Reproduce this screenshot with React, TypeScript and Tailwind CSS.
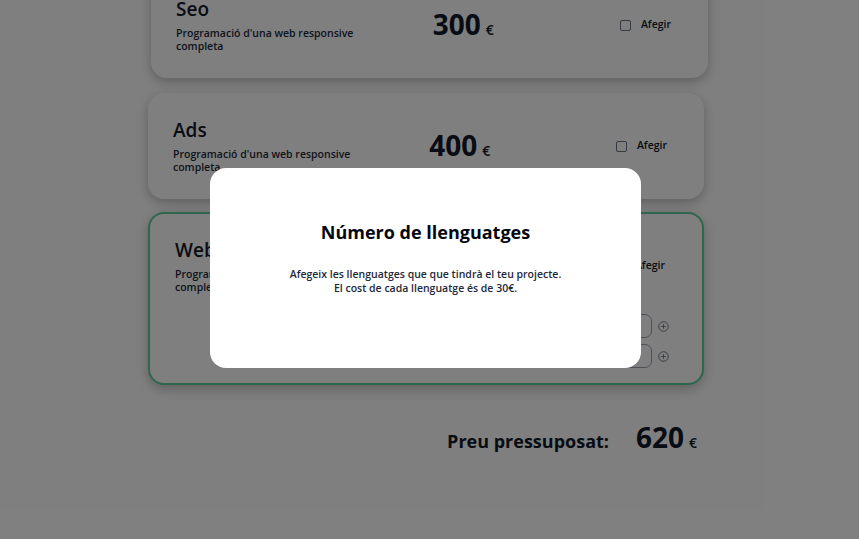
import React from 'react';

interface Service {
  name: string;
  price: number;
  selected?: boolean;
}

const font = { fontFamily: '"Open Sans", "DejaVu Sans", sans-serif' };

const PlusCircle: React.FC = () => (
  <svg width="11" height="11" viewBox="0 0 12 12" className="text-gray-500">
    <circle cx="6" cy="6" r="5.2" fill="none" stroke="currentColor" strokeWidth="1" />
    <path d="M6 3.5v5M3.5 6h5" stroke="currentColor" strokeWidth="1" />
  </svg>
);

const ServiceRow: React.FC<{ s: Service }> = ({ s }) => (
  <div className="flex items-center h-[106px] pl-[25px] pr-[37px] shrink-0">
    <div className="w-[258px]">
      <h2 className="text-[19px] leading-6 font-semibold text-gray-900">{s.name}</h2>
      <p className="mt-[6px] w-[182px] text-[10.5px] leading-[13px] font-semibold text-gray-800">
        Programació d'una web responsive completa
      </p>
    </div>
    <div className="flex items-baseline gap-[5px] w-[188px]">
      <span className="text-[28px] leading-none font-bold text-gray-900">{s.price}</span>
      <span className="text-[14px] font-semibold text-gray-900">€</span>
    </div>
    <label className="flex items-center gap-[10px] text-[10.5px] font-semibold text-gray-900">
      <span className={`w-[11px] h-[11px] rounded-[2px] border ${s.selected ? 'border-emerald-600 bg-emerald-500' : 'border-gray-500 bg-white'}`}></span>
      Afegir
    </label>
  </div>
);

const Counter: React.FC<{ label: string; value: number }> = ({ label, value }) => (
  <div className="flex items-center justify-end gap-[6px]">
    <span className="text-[10.5px] font-semibold text-gray-800 mr-2">{label}</span>
    <div className="w-[80px] h-[24px] rounded-[7px] border border-gray-400 bg-white flex items-center justify-center text-[11px]">
      {value}
    </div>
    <PlusCircle />
  </div>
);

export default function App() {
  const seo: Service = { name: 'Seo', price: 300 };
  const ads: Service = { name: 'Ads', price: 400 };
  const web: Service = { name: 'Web', price: 500, selected: true };

  return (
    <div className="relative w-[859px] h-[539px] overflow-hidden bg-white" style={font}>
      <div className="flex flex-col pl-[148px] -mt-[28px]">
        <div className="ml-[3px] w-[557px] rounded-2xl bg-white shadow-[0_4px_12px_rgba(0,0,0,0.25)]">
          <ServiceRow s={seo} />
        </div>
        <div className="mt-[15px] w-[556px] rounded-2xl bg-white shadow-[0_4px_12px_rgba(0,0,0,0.25)]">
          <ServiceRow s={ads} />
        </div>
        <div className="mt-[13px] w-[556px] h-[173px] rounded-2xl border-2 border-[#5fcf9c] bg-white shadow-[0_4px_12px_rgba(0,0,0,0.25)]">
          <div className="-mt-[1px]">
            <ServiceRow s={web} />
          </div>
          <div className="flex flex-col gap-[6px] pr-[33px] -mt-[5px]">
            <Counter label="Número de pàgines" value={2} />
            <Counter label="Número de llenguatges" value={2} />
          </div>
        </div>
        <div className="w-[556px] flex items-baseline justify-end pr-[7px] mt-[38px]">
          <span className="text-[18px] font-bold text-gray-900">Preu pressuposat:</span>
          <span className="ml-[27px] text-[28px] leading-none font-bold text-gray-900">620</span>
          <span className="ml-[5px] text-[14px] font-semibold text-gray-900">€</span>
        </div>
      </div>

      <div className="absolute inset-0 bg-black/50 flex items-center justify-center pr-[8px] pb-[3px]">
        <div className="w-[431px] h-[200px] rounded-2xl bg-white flex flex-col items-center pt-[52px]">
          <h3 className="text-[18px] leading-6 font-bold text-gray-950">Número de llenguatges</h3>
          <p className="mt-[23px] text-center text-[10.5px] leading-[14px] font-semibold text-gray-800">
            Afegeix les llenguatges que que tindrà el teu projecte.
            <br />
            El cost de cada llenguatge és de 30€.
          </p>
        </div>
      </div>
    </div>
  );
}
